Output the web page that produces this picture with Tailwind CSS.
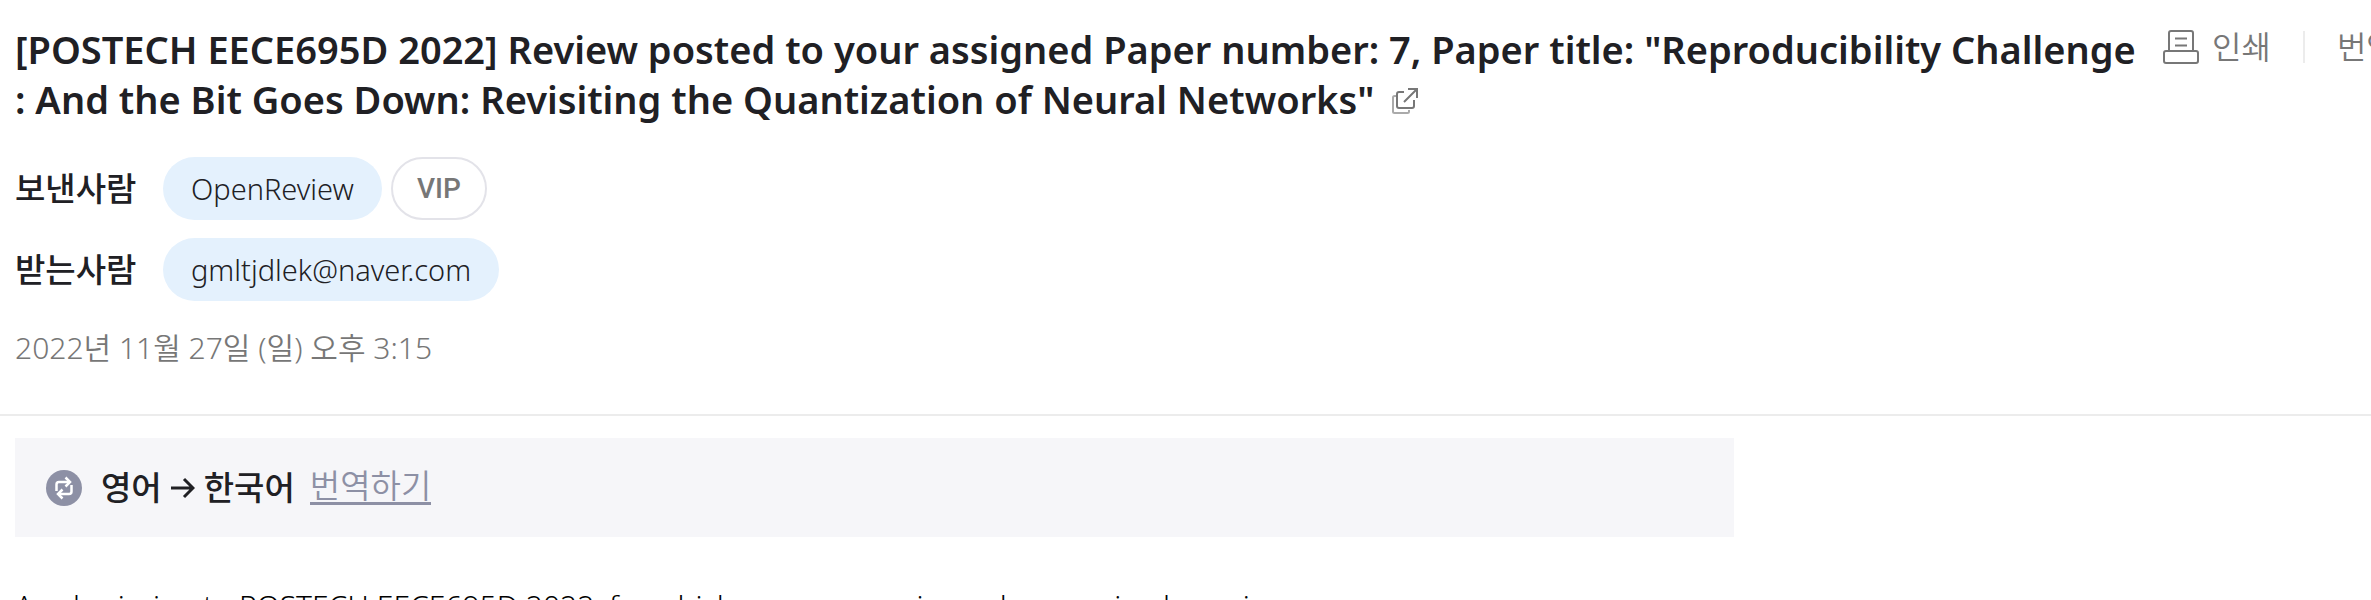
<!DOCTYPE html>
<html lang="ko">
<head>
<meta charset="utf-8">
<title>메일 읽기</title>
<script src="https://cdn.jsdelivr.net/npm/@tailwindcss/browser@4"></script>
</head>
<body class="h-screen overflow-hidden bg-white font-['Noto_Sans','Noto_Sans_CJK_KR',sans-serif] text-[#202024]">
<header class="border-b-2 border-[#ececec] pl-[15px] pt-6 pb-[45px]">
  <div class="flex items-start gap-5">
    <h1 class="min-w-0 flex-1 text-[38px] font-semibold leading-[50px]">[POSTECH EECE695D 2022] Review posted to your assigned Paper number: 7, Paper title: "Reproducibility Challenge<br>: And the Bit Goes Down: Revisiting the Quantization of Neural Networks"
      <button type="button" aria-label="새 창으로 보기" class="ml-2 inline-block align-baseline">
        <svg width="26" height="26" viewBox="0 0 26 26" fill="none" stroke-width="2"><path d="M4 8H2.500Q1 8 1 9.500V23.500Q1 25 2.500 25H15.500Q17 25 17 23.500V22" stroke="#aaa"/><path d="M12 4H7Q5 4 5 6V18Q5 20 7 20H20Q22 20 22 18V12" stroke="#777"/><path d="M12 14L24 2M16 1H25V10" stroke="#777"/></svg>
      </button>
    </h1>
    <nav aria-label="메일 도구" class="mt-0.5 flex w-[208px] shrink-0 items-center overflow-hidden whitespace-nowrap text-[32px] font-[350] leading-[42px] text-[#777]">
      <button type="button" class="flex shrink-0 items-center gap-[13px]">
        <svg width="36" height="36" viewBox="0 0 36 36" fill="none" stroke="#777" stroke-width="2"><path d="M6 21V4Q6 2 8 2H28Q30 2 30 4V21M12 9.500H24M12 16.500H24"/><rect x="1" y="22" width="34" height="12" rx="2"/></svg>
        인쇄
      </button>
      <span class="mx-8 h-8 w-[2px] shrink-0 bg-[#ececec]"></span>
      <button type="button" class="shrink-0">번역</button>
    </nav>
  </div>
  <dl class="mt-[33px] flex flex-col gap-[18px] text-[29px]">
    <div class="flex h-[63px] items-center">
      <dt class="w-[148px] shrink-0 text-[33px] font-medium">보낸사람</dt>
      <dd class="flex gap-[9px] font-[350]">
        <button type="button" class="h-[63px] rounded-full bg-[#e4f1fd] px-7">OpenReview</button>
        <button type="button" class="h-[63px] rounded-full border-2 border-[#e3e3e9] px-6 font-['Roboto'] text-[28px] font-medium text-[#777]">VIP</button>
      </dd>
    </div>
    <div class="flex h-[63px] items-center">
      <dt class="w-[148px] shrink-0 text-[33px] font-medium">받는사람</dt>
      <dd class="font-[350]"><button type="button" class="h-[63px] rounded-full bg-[#e4f1fd] px-7">gmltjdlek@naver.com</button></dd>
    </div>
  </dl>
  <time datetime="2022-11-27T15:15" class="mt-[26px] block text-[30px] font-[350] leading-[42px] text-[#777]">2022년 11월 27일 (일) 오후 3:15</time>
</header>
<main class="px-[15px] pt-[22px]">
  <section class="flex h-[99px] w-[1719px] max-w-full items-center bg-[#f6f6f9] pl-[31px] text-[33px]">
    <svg class="mr-[19px]" width="36" height="36" viewBox="0 0 36 36"><circle cx="18" cy="18" r="18" fill="#8d90a5"/><g fill="none" stroke="#fff" stroke-width="2.500"><path d="M10.500 21V14.500Q10.500 12 13 12H24M25.500 15V21.500Q25.500 24 23 24H12"/><path d="M19.500 7.500L24 12L19.500 16.500M16.500 19.500L12 24L16.500 28.500"/></g></svg>
    <span class="flex items-center gap-[9px] font-medium">영어
      <svg width="24" height="22" viewBox="0 0 24 22" fill="none" stroke="#202024" stroke-width="3"><path d="M0 11H22M13 2L22 11L13 20"/></svg>
      한국어</span>
    <button type="button" class="ml-[15px] border-b-3 border-[#8d90a5] font-[350] leading-8 text-[#8d90a5]">번역하기</button>
  </section>
  <p class="mt-[45px] whitespace-nowrap text-[30px] font-[350] leading-[48px] text-black">A submission to POSTECH EECE695D 2022, for which you are a reviewer, has received a review.</p>
</main>
</body>
</html>
